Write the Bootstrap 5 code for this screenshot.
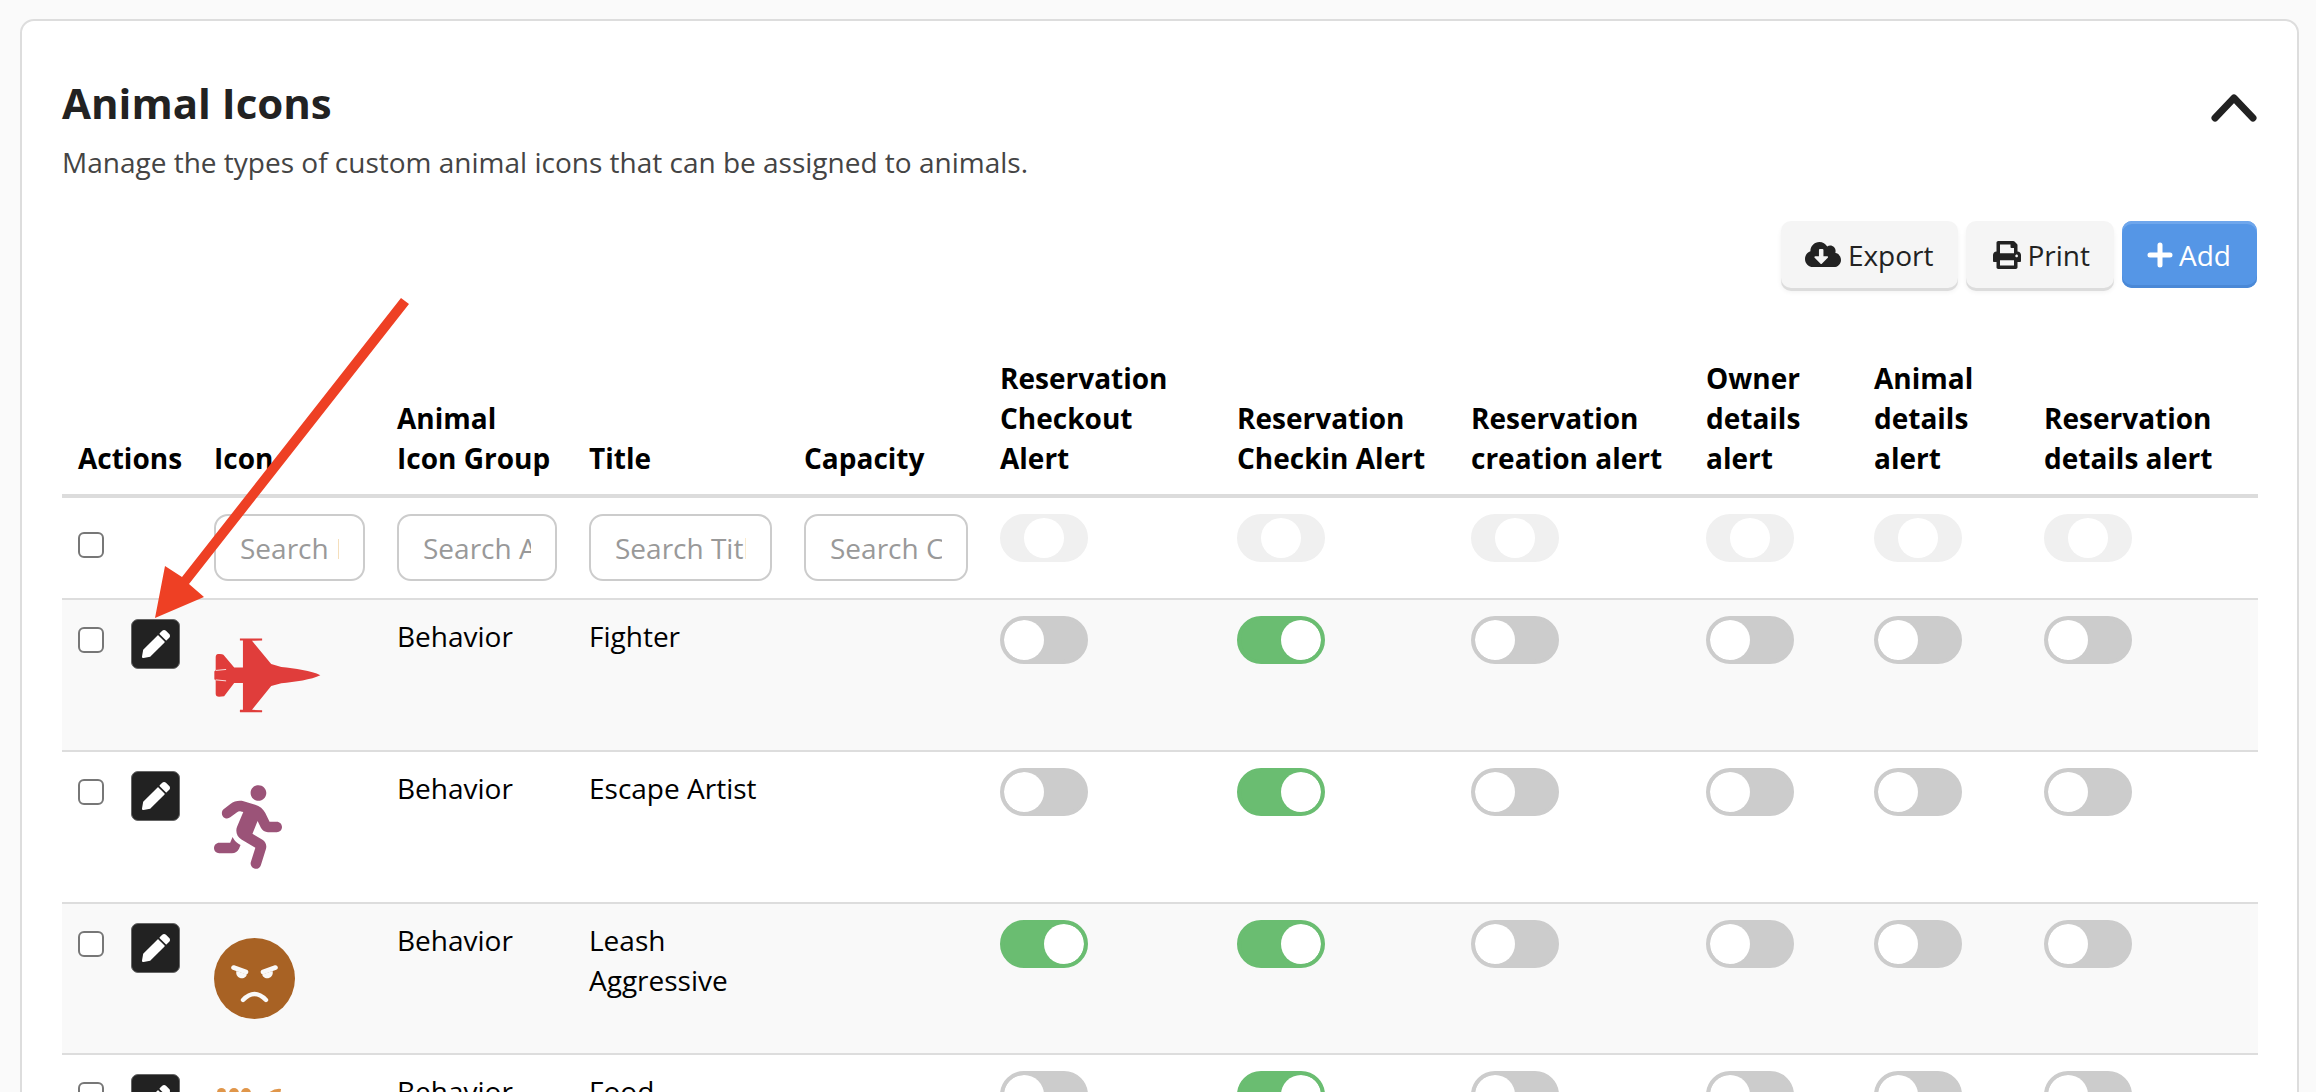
<!doctype html>
<html lang="en">
<head>
<meta charset="utf-8">
<title>Animal Icons</title>
<link href="https://cdn.jsdelivr.net/npm/bootstrap@5.3.0/dist/css/bootstrap.min.css" rel="stylesheet">
<style>
html,body{height:1092px;overflow:hidden}
body{background:#fafafa;font-family:"Open Sans","Noto Sans",sans-serif;font-size:28px;line-height:40px;color:#000;padding:19px 17px 0 20px}
.panel-box{border:2px solid #dddddd;border-radius:14px;background:#fff;padding:58px 40px 0 40px;--bs-card-bg:#fff;height:1300px}
.panel-title{font-size:42px;line-height:48px;font-weight:700;color:#222;margin:0}
.panel-desc{font-size:28px;line-height:40px;color:#444;margin:15px 0 0}
.collapse-ico{width:46px;height:28px;margin-top:15px;flex:none}
.tool-row{margin-top:39px;margin-bottom:70px;gap:8px}
.tool-btn{font-size:28px;line-height:40px;height:67px;padding:0 24px;border:0;border-radius:10px;display:inline-flex;align-items:center;gap:7px;background:#f5f5f5;color:#222;box-shadow:0 3px 0 #dcdcdc,0 4px 5px rgba(0,0,0,.06)}
.tool-btn:hover{background:#f5f5f5;color:#222}
.tool-print{padding-left:27px}
.tool-add{background:#5596e6;color:#fff;padding:0 26px 0 25px;box-shadow:inset 0 3px 0 #6ea6ec,inset 0 -3px 0 #4a88d6;gap:6px}
.tool-add:hover{background:#5596e6;color:#fff}
.grid-tbl{table-layout:fixed;width:2196px;border-collapse:separate;border-spacing:0;margin:0;--bs-table-striped-bg:#f9f9f9;--bs-table-bg:transparent;--bs-table-color:#000;--bs-table-striped-color:#000;color:#000}
.grid-tbl>thead>tr>th{font-weight:700;font-size:28px;line-height:40px;padding:0 16px 16px;border-bottom:4px solid #dcdcdc;vertical-align:bottom}
.grid-tbl>thead>tr>th:first-child{padding-right:0;white-space:nowrap}
.grid-tbl>thead>tr.filter-row>td{padding:16px;height:102px;border-bottom:2px solid #dddddd;vertical-align:top}
.grid-tbl>tbody>tr>td{padding:16px;height:152px;border-bottom:2px solid #dddddd;vertical-align:top;line-height:40px;font-size:28px}
.grid-tbl>tbody>tr:nth-child(3)>td{height:151px}
.pick.form-check-input[type=checkbox]{width:26px;height:26px;margin:0;border:2px solid #777;border-radius:6px;float:none;background-color:#fff;flex:none}
.act-wrap{display:flex;align-items:flex-start;gap:27px}
.act-wrap .pick.form-check-input[type=checkbox]{margin-top:11px}
.filter-row .pick.form-check-input[type=checkbox]{margin-top:18px;display:block}
.edit-btn{width:49px;height:50px;margin-top:3px;background:#222;border:1px solid #666;border-radius:7px;padding:0;display:flex;align-items:center;justify-content:center}
.edit-btn svg{width:28px;height:28px}
.find-box.form-control{height:67px;font-size:28px;line-height:40px;padding:0 24px;border:2px solid #cccccc;border-radius:14px;color:#222;width:100%}
.find-box.form-control::placeholder{color:#999}
.form-switch.tg-wrap{padding:0;margin:0;min-height:0;height:48px;display:block}
.form-switch.tg-wrap .form-check-input{--bs-form-switch-bg:url("data:image/svg+xml,%3csvg xmlns='http://www.w3.org/2000/svg' viewBox='-4 -4 8 8'%3e%3ccircle r='4' fill='%23fff'/%3e%3c/svg%3e");width:88px;height:48px;margin:0;float:none;border:4px solid #cccccc;background-color:#cccccc;border-radius:24px;background-size:40px 40px;background-position:left center;display:block}
.form-switch.tg-wrap .form-check-input:checked{--bs-form-switch-bg:url("data:image/svg+xml,%3csvg xmlns='http://www.w3.org/2000/svg' viewBox='-4 -4 8 8'%3e%3ccircle r='4' fill='%23fff'/%3e%3c/svg%3e");border-color:#6abd71;background-color:#6abd71;background-position:right center}
.form-switch.tg-wrap .tg-null.form-check-input{border-color:#f0f0f0;background-color:#f0f0f0;background-position:center center}
.ico-jet{display:block;width:107px;height:75px;margin-top:22px}
.ico-run{display:block;width:68px;height:84px;margin-top:17px}
.ico-face{display:block;width:81px;height:81px;margin-top:18px}
.ico-hand{display:block;width:68px;height:84px;margin-top:17px}
.mark-arrow{position:absolute;left:0;top:0;width:2316px;height:1092px;pointer-events:none}
</style>
</head>
<body>
<div class="card panel-box">
  <div class="d-flex justify-content-between align-items-start">
    <div>
      <h2 class="panel-title">Animal Icons</h2>
      <p class="panel-desc">Manage the types of custom animal icons that can be assigned to animals.</p>
    </div>
    <svg class="collapse-ico" viewBox="0 0 46 28" aria-hidden="true"><polyline points="4,24 23,4 42,24" fill="none" stroke="#222" stroke-width="7" stroke-linecap="round" stroke-linejoin="round"/></svg>
  </div>
  <div class="d-flex justify-content-end tool-row">
    <button class="btn tool-btn" type="button"><svg width="36" height="29" viewBox="0 0 640 512" aria-hidden="true"><path fill="#222" d="M537.6 226.6c4.1-10.7 6.4-22.4 6.4-34.6 0-53-43-96-96-96-19.7 0-38.1 6-53.3 16.2C367 64.2 315.3 32 256 32c-88.4 0-160 71.6-160 160 0 2.7.1 5.4.2 8.1C40.2 219.8 0 273.2 0 336c0 79.5 64.5 144 144 144h368c70.7 0 128-57.3 128-128 0-61.9-44-113.6-102.4-125.4zm-132.9 88.7L299.3 420.7c-6.2 6.2-16.4 6.2-22.6 0L171.3 315.3c-10.1-10.1-2.9-27.3 11.3-27.3H248V176c0-8.8 7.2-16 16-16h48c8.8 0 16 7.2 16 16v112h65.4c14.2 0 21.4 17.2 11.3 27.3z"/></svg>Export</button>
    <button class="btn tool-btn tool-print" type="button"><svg width="28" height="28" viewBox="0 0 512 512" aria-hidden="true"><path fill="#222" d="M448 192V77.25c0-8.49-3.37-16.62-9.37-22.63L393.37 9.37c-6-6-14.14-9.37-22.63-9.37H96C78.33 0 64 14.33 64 32v160c-35.35 0-64 28.65-64 64v112c0 8.84 7.16 16 16 16h48v96c0 17.67 14.33 32 32 32h320c17.67 0 32-14.33 32-32v-96h48c8.84 0 16-7.16 16-16V256c0-35.35-28.65-64-64-64zm-64 256H128v-96h256v96zm0-224H128V64h192v48c0 8.84 7.16 16 16 16h48v96zm48 72c-13.25 0-24-10.75-24-24 0-13.26 10.75-24 24-24s24 10.74 24 24c0 13.25-10.75 24-24 24z"/></svg>Print</button>
    <button class="btn tool-btn tool-add" type="button"><svg width="26" height="26" viewBox="0 0 26 26" aria-hidden="true"><path d="M13 3v20M3 13h20" stroke="#fff" stroke-width="5" stroke-linecap="round"/></svg>Add</button>
  </div>
  <table class="table table-striped grid-tbl">
    <colgroup>
      <col style="width:136px"><col style="width:183px"><col style="width:192px"><col style="width:215px"><col style="width:196px"><col style="width:237px"><col style="width:234px"><col style="width:235px"><col style="width:168px"><col style="width:170px"><col style="width:230px">
    </colgroup>
    <thead>
      <tr>
        <th>Actions</th><th>Icon</th><th>Animal Icon Group</th><th>Title</th><th>Capacity</th>
        <th>Reservation Checkout Alert</th><th>Reservation Checkin Alert</th><th>Reservation creation alert</th>
        <th>Owner details alert</th><th>Animal details alert</th><th>Reservation details alert</th>
      </tr>
      <tr class="filter-row">
        <td><input class="form-check-input pick" type="checkbox" aria-label="Select all"></td>
        <td><input class="form-control find-box" placeholder="Search Icon"></td>
        <td><input class="form-control find-box" placeholder="Search Animal Icon Group"></td>
        <td><input class="form-control find-box" placeholder="Search Title"></td>
        <td><input class="form-control find-box" placeholder="Search Capacity"></td>
        <td><div class="form-check form-switch tg-wrap"><input class="form-check-input tg-null" type="checkbox" role="switch" aria-label="Filter"></div></td>
        <td><div class="form-check form-switch tg-wrap"><input class="form-check-input tg-null" type="checkbox" role="switch" aria-label="Filter"></div></td>
        <td><div class="form-check form-switch tg-wrap"><input class="form-check-input tg-null" type="checkbox" role="switch" aria-label="Filter"></div></td>
        <td><div class="form-check form-switch tg-wrap"><input class="form-check-input tg-null" type="checkbox" role="switch" aria-label="Filter"></div></td>
        <td><div class="form-check form-switch tg-wrap"><input class="form-check-input tg-null" type="checkbox" role="switch" aria-label="Filter"></div></td>
        <td><div class="form-check form-switch tg-wrap"><input class="form-check-input tg-null" type="checkbox" role="switch" aria-label="Filter"></div></td>
      </tr>
    </thead>
    <tbody id="rows"></tbody>
  </table>
</div>
<svg class="mark-arrow" viewBox="0 0 2316 1092" aria-hidden="true"><polygon fill="#ee4024" points="401,298 409,304 189,584 204,597 155,618 165,566 182,577"/></svg>
<script>
const pencil='<svg viewBox="0 0 512 512" aria-hidden="true"><path fill="#fff" d="M497.9 142.1l-46.1 46.1c-4.7 4.7-12.3 4.7-17 0l-111-111c-4.7-4.7-4.7-12.3 0-17l46.1-46.1c18.7-18.7 49.1-18.7 67.9 0l60.1 60.1c18.8 18.7 18.8 49.1 0 67.9z"/><path fill="#fff" d="M284.2 99.8L21.6 362.4.4 483.9c-2.9 16.4 11.4 30.6 27.8 27.8l121.5-21.3 262.6-262.6c4.7-4.7 4.7-12.3 0-17l-111-111c-4.8-4.7-12.4-4.7-17.1 0z"/></svg>';
const icons={
jet:'<svg class="ico-jet" viewBox="100 83 318 222" aria-hidden="true"><path fill="#e03d3b" d="M416 193C390 180 340 173 300 169L270 160 213 91 243 90V84H177V90H186V170H160L128 132Q124 129 112 130 105 131 105 140V178L101 182V205L105 208V248Q105 257 115 257L130 256 160 216H186V296H177V303H243V297L213 296 270 225 300 217C340 213 390 206 416 193Z"/><path d="M105 179L136 176M105 207L136 210" stroke="#f9f9f9" stroke-width="2.5"/></svg>',
run:'<svg class="ico-run" viewBox="0 0 416 512" aria-hidden="true"><path fill="#9b5378" d="M272 96c26.51 0 48-21.49 48-48S298.51 0 272 0s-48 21.49-48 48 21.49 48 48 48zM113.69 317.47l-14.8 34.52H32c-17.67 0-32 14.33-32 32s14.33 32 32 32h77.45c19.25 0 36.58-11.44 44.11-29.09l8.79-20.52-10.67-6.3c-17.32-10.23-30.06-25.37-37.99-42.61zM384 223.99h-44.03l-26.06-53.25c-12.5-25.55-35.45-44.23-61.78-50.94l-71.08-21.14c-28.3-6.8-57.77-.55-80.84 17.14l-39.67 30.41c-14.03 10.75-16.69 30.83-5.92 44.86s30.84 16.66 44.86 5.92l39.69-30.41c7.67-5.89 17.44-8 25.27-6.14l14.7 4.37-37.46 87.39c-12.62 29.48-1.31 64.01 26.3 80.31l84.98 50.17-27.47 87.73c-5.28 16.86 4.11 34.81 20.97 40.09 3.19 1 6.41 1.48 9.58 1.48 13.61 0 26.23-8.77 30.52-22.45l31.64-101.06c5.91-20.77-2.89-43.08-21.64-54.39l-61.24-36.14 31.31-78.28 20.27 41.43c8 16.34 24.92 26.89 43.11 26.89H384c17.67 0 32-14.33 32-32s-14.33-31.99-32-31.99z"/></svg>',
face:'<svg class="ico-face" viewBox="0 0 81 81" aria-hidden="true"><circle cx="40.5" cy="40.5" r="40.5" fill="#a86224"/><path d="M19.5 29.5L32 34M61.5 29.5L49 34" stroke="#f9f9f9" stroke-width="4.6" stroke-linecap="round"/><path d="M22.5 33L33 36.5A5.2 5.2 0 1 1 22.5 33ZM58.5 33L48 36.5A5.2 5.2 0 1 0 58.5 33Z" fill="#f9f9f9"/><path d="M29 62Q40.5 50 52 62" fill="none" stroke="#f9f9f9" stroke-width="4.4" stroke-linecap="round"/></svg>',
hand:'<svg class="ico-hand" viewBox="0 0 68 84" aria-hidden="true"><g fill="#e0964a"><rect x="3" y="0" width="9" height="30" rx="4.5"/><rect x="15" y="0" width="10" height="30" rx="5"/><rect x="27" y="0" width="10" height="30" rx="5"/><path d="M53 6Q60 0 67 1L66 8 56 14Z"/><rect x="3" y="26" width="48" height="50" rx="10"/></g></svg>'};
const data=[
['jet','Behavior','Fighter',[0,1,0,0,0,0]],
['run','Behavior','Escape Artist',[0,1,0,0,0,0]],
['face','Behavior','Leash Aggressive',[1,1,0,0,0,0]],
['hand','Behavior','Food',[0,1,0,0,0,0]]];
document.getElementById('rows').innerHTML=data.map(r=>`<tr>
<td><div class="act-wrap"><input class="form-check-input pick" type="checkbox" aria-label="Select row"><button class="btn edit-btn" type="button" aria-label="Edit">${pencil}</button></div></td>
<td>${icons[r[0]]}</td><td>${r[1]}</td><td>${r[2]}</td><td></td>
${r[3].map(v=>`<td><div class="form-check form-switch tg-wrap"><input class="form-check-input" type="checkbox" role="switch" aria-label="Alert"${v?' checked':''}></div></td>`).join('')}
</tr>`).join('');
</script>
<script src="https://cdn.jsdelivr.net/npm/bootstrap@5.3.0/dist/js/bootstrap.bundle.min.js"></script>
</body>
</html>
